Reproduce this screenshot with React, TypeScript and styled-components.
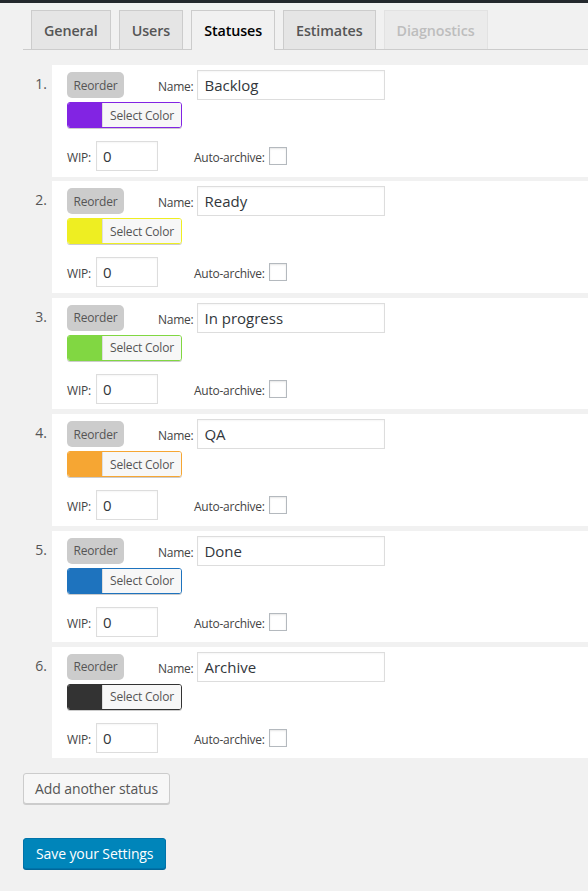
import { createGlobalStyle, styled } from "styled-components";

const GlobalStyle = createGlobalStyle`
  html, body {
    margin: 0;
    padding: 0;
    background: #f1f1f1;
  }
  body {
    font-family: "Open Sans", "Noto Sans", "Liberation Sans", sans-serif;
    color: #444;
  }
`;

const AdminBar = styled.div`
  height: 3px;
  background: #23282d;
`;

const Wrap = styled.div`
  padding: 7px 0 22px 23px;
`;

const TabBar = styled.nav`
  display: flex;
  gap: 8px;
  padding-left: 8px;
  border-bottom: 1px solid #ccc;
  height: 39px;
`;

const Tab = styled.a<{ $active?: boolean; $disabled?: boolean }>`
  display: flex;
  align-items: center;
  box-sizing: border-box;
  height: ${({ $active }) => ($active ? "40px" : "39px")};
  padding: 0 12px;
  font-size: 14.3px;
  font-weight: 600;
  letter-spacing: -0.1px;
  border: 1px solid ${({ $disabled }) => ($disabled ? "#e2e2e2" : "#ccc")};
  border-bottom: none;
  background: ${({ $active, $disabled }) =>
    $active ? "#f1f1f1" : $disabled ? "#ebebeb" : "#e5e5e5"};
  color: ${({ $active, $disabled }) =>
    $active ? "#000" : $disabled ? "#bdbdbd" : "#555"};
`;

const StatusList = styled.ol`
  list-style: none;
  margin: 15px 0 0;
  padding: 0;
  display: flex;
  flex-direction: column;
  gap: 4.9px;
`;

const StatusRow = styled.li`
  display: flex;
`;

const Number = styled.div`
  width: 29px;
  box-sizing: border-box;
  padding: 9px 5px 0 0;
  text-align: right;
  font-size: 14px;
  color: #555;
`;

const Card = styled.div`
  flex: 1;
  height: 111.5px;
  box-sizing: border-box;
  background: #fff;
  padding: 5px 0 0 15px;
  display: flex;
  flex-direction: column;
`;

const TopRow = styled.div`
  display: flex;
  align-items: flex-start;
  height: 30px;
`;

const ReorderButton = styled.span`
  margin-top: 2px;
  width: 57px;
  height: 26px;
  border-radius: 5px;
  background: #ccc;
  color: #555;
  font-size: 12px;
  display: flex;
  align-items: center;
  justify-content: center;
  letter-spacing: -0.2px;
`;

const Label = styled.label<{ $gap: number }>`
  margin-left: ${({ $gap }) => $gap}px;
  font-size: 12px;
  color: #444;
  letter-spacing: -0.25px;
  align-self: center;
  padding-top: 3px;
`;

const TextInput = styled.input<{ $width: number }>`
  box-sizing: border-box;
  width: ${({ $width }) => $width}px;
  height: 30px;
  margin-left: 4px;
  padding: 0 6px;
  border: 1px solid #ddd;
  background: #fff;
  font-family: inherit;
  font-size: 15px;
  color: #32373c;
  box-shadow: inset 0 1px 2px rgba(0, 0, 0, 0.04);
  outline: none;
`;

const ColorButton = styled.span<{ $color: string }>`
  margin-top: 2px;
  width: 115px;
  height: 26px;
  box-sizing: border-box;
  display: flex;
  border: 1px solid ${({ $color }) => $color};
  border-radius: 3px;
  overflow: hidden;
  box-shadow: 0 1px 0 #ccc;
`;

const Swatch = styled.span<{ $color: string }>`
  width: 34px;
  background: ${({ $color }) => $color};
`;

const SwatchText = styled.span`
  flex: 1;
  display: flex;
  align-items: center;
  justify-content: center;
  background: #f7f7f7;
  border-left: 1px solid #ddd;
  font-size: 12px;
  color: #555;
  letter-spacing: -0.2px;
`;

const BottomRow = styled.div`
  display: flex;
  align-items: center;
  margin-top: 13px;
  height: 30px;
`;

const WipLabel = styled.label`
  font-size: 12px;
  color: #444;
  letter-spacing: -0.2px;
  margin-right: 1px;
  padding-top: 3px;
`;

const Checkbox = styled.span`
  margin-left: 4px;
  width: 16px;
  height: 16px;
  border: 1px solid #b4b9be;
  background: #fff;
  box-shadow: inset 0 1px 2px rgba(0, 0, 0, 0.1);
`;

const Actions = styled.div`
  display: flex;
  flex-direction: column;
  align-items: flex-start;
  gap: 34px;
  margin-top: 15px;
`;

const Button = styled.button<{ $primary?: boolean }>`
  height: 31px;
  box-sizing: border-box;
  padding: 0 ${({ $primary }) => ($primary ? "12px" : "11px")};
  border-radius: 3px;
  font-family: inherit;
  font-size: 14px;
  letter-spacing: -0.1px;
  cursor: pointer;
  border: 1px solid ${({ $primary }) => ($primary ? "#0073aa" : "#ccc")};
  background: ${({ $primary }) => ($primary ? "#0085ba" : "#f7f7f7")};
  color: ${({ $primary }) => ($primary ? "#fff" : "#555")};
  box-shadow: 0 1px 0 ${({ $primary }) => ($primary ? "#006799" : "#ccc")};
`;

const statuses = [
  { name: "Backlog", color: "#8224e3" },
  { name: "Ready", color: "#eeee22" },
  { name: "In progress", color: "#81d742" },
  { name: "QA", color: "#f6a633" },
  { name: "Done", color: "#1e73be" },
  { name: "Archive", color: "#333333" },
];

const tabs = ["General", "Users", "Statuses", "Estimates", "Diagnostics"];

export default function App() {
  return (
    <>
      <GlobalStyle />
      <AdminBar />
      <Wrap>
        <TabBar>
          {tabs.map((t) => (
            <Tab key={t} $active={t === "Statuses"} $disabled={t === "Diagnostics"}>
              {t}
            </Tab>
          ))}
        </TabBar>
        <StatusList>
          {statuses.map((s, i) => (
            <StatusRow key={s.name}>
              <Number>{i + 1}.</Number>
              <Card>
                <TopRow>
                  <ReorderButton>Reorder</ReorderButton>
                  <Label $gap={34}>Name:</Label>
                  <TextInput $width={188} defaultValue={s.name} />
                </TopRow>
                <ColorButton $color={s.color}>
                  <Swatch $color={s.color} />
                  <SwatchText>Select Color</SwatchText>
                </ColorButton>
                <BottomRow>
                  <WipLabel>WIP:</WipLabel>
                  <TextInput $width={62} defaultValue="0" />
                  <Label $gap={36}>Auto-archive:</Label>
                  <Checkbox />
                </BottomRow>
              </Card>
            </StatusRow>
          ))}
        </StatusList>
        <Actions>
          <Button>Add another status</Button>
          <Button $primary>Save your Settings</Button>
        </Actions>
      </Wrap>
    </>
  );
}
